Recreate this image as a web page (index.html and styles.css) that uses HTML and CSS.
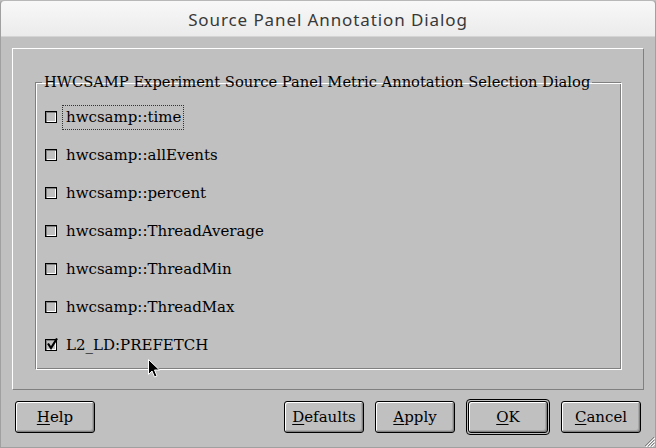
FILE: index.html
```html
<!DOCTYPE html>
<html>
<head>
<meta charset="utf-8">
<link rel="stylesheet" href="styles.css">
</head>
<body>
<div class="window">
  <div class="titlebar">Source Panel Annotation Dialog</div>
  <div class="content">
    <div class="frame">
      <fieldset class="group">
        <legend class="group-title">HWCSAMP Experiment Source Panel Metric Annotation Selection Dialog</legend>
        <div class="row"><span class="check"></span><span class="label focus">hwcsamp::time</span></div>
        <div class="row"><span class="check"></span><span class="label">hwcsamp::allEvents</span></div>
        <div class="row"><span class="check"></span><span class="label">hwcsamp::percent</span></div>
        <div class="row"><span class="check"></span><span class="label">hwcsamp::ThreadAverage</span></div>
        <div class="row"><span class="check"></span><span class="label">hwcsamp::ThreadMin</span></div>
        <div class="row"><span class="check"></span><span class="label">hwcsamp::ThreadMax</span></div>
        <div class="row"><span class="check checked"><svg width="13" height="13" viewBox="0 0 13 13"><path d="M2 5.5 L5 10 L11 0.5" fill="none" stroke="#000" stroke-width="2.2"/></svg></span><span class="label">L2_LD:PREFETCH</span></div>
      </fieldset>
    </div>
    <div class="buttons">
      <button class="btn"><u>H</u>elp</button>
      <div class="btn-group">
        <button class="btn"><u>D</u>efaults</button>
        <button class="btn"><u>A</u>pply</button>
        <div class="default-ring"><button class="btn"><u>O</u>K</button></div>
        <button class="btn"><u>C</u>ancel</button>
      </div>
    </div>
  </div>
  <svg class="grip" width="12" height="12" viewBox="0 0 12 12">
    <path d="M11 2 L2 11 M11 5 L5 11 M11 8 L8 11" stroke="#808080" stroke-width="1"/>
    <path d="M12 3 L3 12 M12 6 L6 12 M12 9 L9 12" stroke="#ffffff" stroke-width="1"/>
  </svg>
  <svg class="cursor" width="13" height="20" viewBox="0 0 13 20">
    <path d="M0.5 0.5 L0.5 15.5 L4 12 L6.5 18 L9 17 L6.5 11 L11.5 11 Z" fill="#000" stroke="#fff" stroke-width="1"/>
  </svg>
</div>
</body>
</html>
```
FILE: styles.css
```css
html, body {
  margin: 0;
  padding: 0;
}
body {
  width: 656px;
  height: 448px;
  overflow: hidden;
  background: #c0c0c0;
  font-family: "DejaVu Serif", serif;
  font-size: 15px;
  color: #000;
}
.window {
  position: relative;
  width: 656px;
  height: 448px;
  box-sizing: border-box;
  border: 1px solid #a0a0a0;
  border-top-color: #b8b8b8;
  border-radius: 4px 4px 0 0;
  background: #c0c0c0;
  display: flex;
  flex-direction: column;
}
.titlebar {
  height: 36px;
  box-sizing: border-box;
  background: linear-gradient(#f8f8f8, #ebebeb);
  border-bottom: 1px solid #d4d4d4;
  border-radius: 4px 4px 0 0;
  display: flex;
  align-items: center;
  justify-content: center;
  font-family: "Noto Sans", sans-serif;
  font-size: 17px;
  letter-spacing: 0.9px;
  color: #383838;
  padding-top: 1px;
}
.content {
  flex: 1;
  padding: 11px 11px 0 11px;
  display: flex;
  flex-direction: column;
}
.frame {
  border-top: 1px solid #ffffff;
  border-left: 1px solid #ffffff;
  border-right: 1px solid #808080;
  border-bottom: 1px solid #808080;
  height: 342px;
  box-sizing: border-box;
  padding: 24px 21px 0 22px;
}
.group {
  margin: 0;
  height: 297px;
  box-sizing: border-box;
  padding: 7px 0 0 6px;
  border-top: 1px solid #808080;
  border-left: 1px solid #808080;
  border-right: 1px solid #ffffff;
  border-bottom: 1px solid #ffffff;
  box-shadow: inset 1px 1px 0 #ffffff, inset -1px -1px 0 #808080;
}
.group-title {
  padding: 0 2px;
  margin-left: 0;
  line-height: 18px;
  font-size: 14.7px;
}
.row {
  height: 38px;
  display: flex;
  align-items: center;
  padding-left: 3px;
}
.check {
  width: 12px;
  height: 12px;
  box-sizing: border-box;
  border: 1px solid #000;
  box-shadow: inset 1px 1px 0 #808080, inset -1px -1px 0 #ffffff;
  background: #c0c0c0;
  margin-right: 5px;
  position: relative;
}
.check svg {
  position: absolute;
  left: 0;
  top: -2px;
}
.label {
  padding: 3px 2px 3px 3px;
  line-height: 17px;
  border: 1px dotted transparent;
}
.label.focus {
  border-color: #333;
}
.buttons {
  display: flex;
  justify-content: space-between;
  align-items: center;
  padding: 9px 3px 0 3px;
}
.btn-group {
  display: flex;
  align-items: center;
  gap: 11px;
}
.btn {
  width: 80px;
  height: 32px;
  box-sizing: border-box;
  background: #c0c0c0;
  border: 1px solid #000;
  border-radius: 3px;
  box-shadow: inset 1px 1px 0 #ffffff, inset -1px -1px 0 #808080, inset -2px -2px 0 #a8a8a8;
  font-family: "DejaVu Serif", serif;
  font-size: 15px;
  color: #000;
  padding: 0;
  margin: 0;
}
.btn u {
  text-decoration-thickness: 1px;
  text-underline-offset: 2px;
}
.default-ring {
  border: 1px solid #000;
  border-radius: 4px;
  padding: 1px;
  display: flex;
}
.grip {
  position: absolute;
  right: 0;
  bottom: 0;
}
.cursor {
  position: absolute;
  left: 147px;
  top: 358px;
}
```
